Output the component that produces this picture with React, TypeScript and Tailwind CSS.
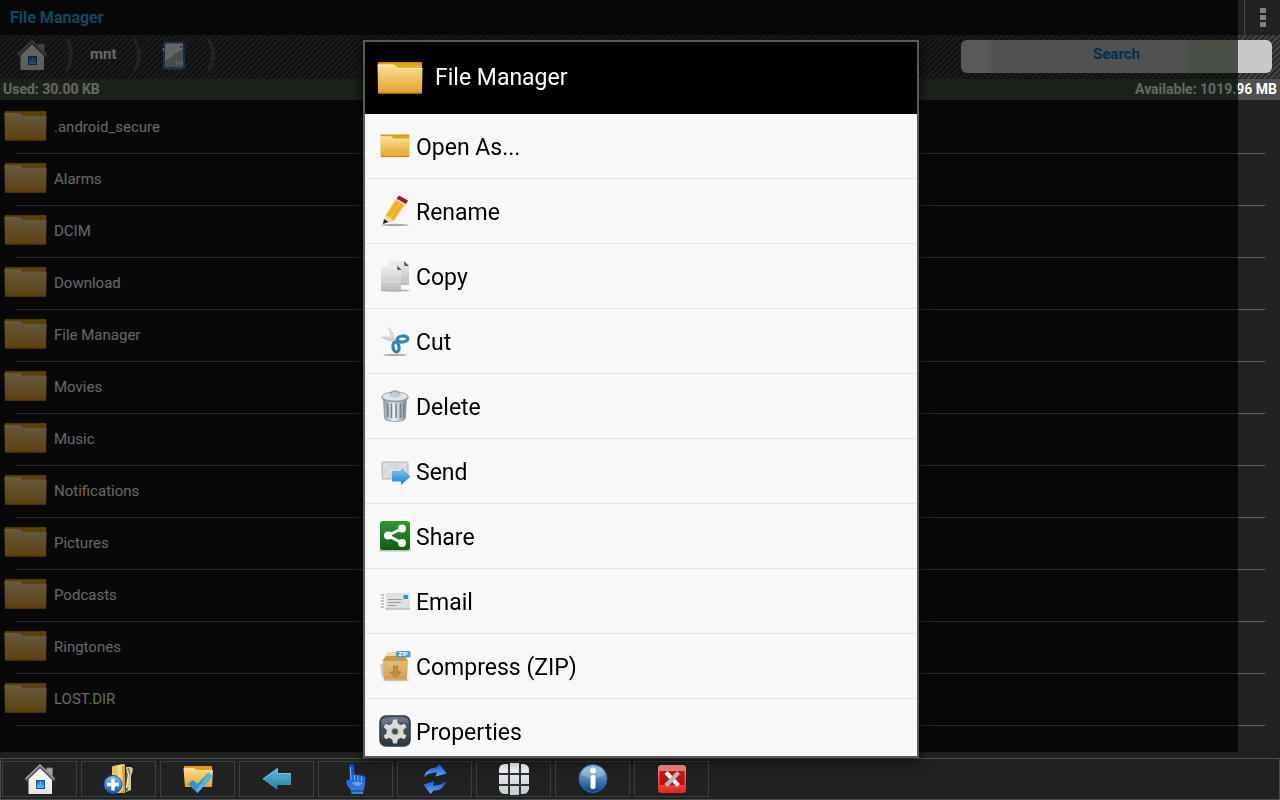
import type { ReactNode } from "react";

const folders = [
  ".android_secure",
  "Alarms",
  "DCIM",
  "Download",
  "File Manager",
  "Movies",
  "Music",
  "Notifications",
  "Pictures",
  "Podcasts",
  "Ringtones",
  "LOST.DIR",
];

// gradients shared by all icons
function IconDefs() {
  const gradients = [
    { id: "folderFront", from: "#fbe09a", to: "#e5a32a" },
    { id: "folderBack", from: "#dd9a12", to: "#f3c14b" },
    { id: "wall", from: "#ffffff", to: "#e4e4e4" },
    { id: "windowBlue", from: "#1b6fd0", to: "#5cc6fa" },
    { id: "paper", from: "#efefef", to: "#bdbdbd" },
    { id: "arrowBlue", from: "#5cb9e0", to: "#2f7f9f" },
    { id: "sendBlue", from: "#7fd0f5", to: "#1c7fc0" },
    { id: "royal", from: "#1f4fd8", to: "#5ab4ff" },
    { id: "hand", from: "#0b3fd0", to: "#3f86dd" },
    { id: "orb", from: "#9cc6e6", to: "#0e3f8f" },
    { id: "plusOrb", from: "#7fc0f5", to: "#1456b8" },
    { id: "green", from: "#2f9a35", to: "#0d5c14" },
    { id: "red", from: "#f0928c", to: "#e0251f" },
    { id: "slate", from: "#59647a", to: "#2c353d" },
    { id: "box", from: "#e3bd72", to: "#cfa04a" },
    { id: "sd", from: "#2f62b0", to: "#4d83c4" },
    { id: "tile", from: "#fafafa", to: "#c3cad0" },
  ];
  return (
    <svg className="absolute h-0 w-0" aria-hidden="true">
      <defs>
        {gradients.map((g) => (
          <linearGradient key={g.id} id={g.id} x1="0" y1="0" x2="0" y2="1">
            <stop offset="0" stopColor={g.from} />
            <stop offset="1" stopColor={g.to} />
          </linearGradient>
        ))}
        <linearGradient id="can" x1="0" y1="0" x2="1" y2="0">
          <stop offset="0" stopColor="#8a99a3" />
          <stop offset="0.45" stopColor="#f1f5f7" />
          <stop offset="1" stopColor="#7d8d98" />
        </linearGradient>
      </defs>
    </svg>
  );
}

function Icon({ children }: { children: ReactNode }) {
  return (
    <svg viewBox="0 0 32 32" className="h-8 w-8 shrink-0" aria-hidden="true">
      {children}
    </svg>
  );
}

function FolderIcon({ className }: { className: string }) {
  return (
    <svg viewBox="0 0 46 34" preserveAspectRatio="none" className={`shrink-0 ${className}`} aria-hidden="true">
      <path d="M1 2.500Q1 1 2.500 1H44Q45 1 45 2.500V12H1Z" fill="url(#folderBack)" />
      <path d="M1 1.500H45" stroke="#c08a16" />
      <path d="M.5 3.500H16.500Q18 3.500 19 5.500Q20 7 21.500 7H45.500L45 31.500Q45 32.500 44 32.500H2Q1 32.500 1 31.500Z" fill="url(#folderFront)" />
      <path d="M.5 4H16.500Q18 4 19 6Q20 7.500 21.500 7.500H45.500" fill="none" stroke="#fff0b8" strokeWidth=".8" />
      <path d="M1.500 32H44.500" stroke="#c47f10" strokeWidth="1.200" />
    </svg>
  );
}

function HomeIcon() {
  return (
    <Icon>
      <path d="M22.500 5H28.500V14L22.500 9Z" fill="#a9a9a9" stroke="#6d6d6d" />
      <path d="M4.500 15L16 4L28 15V31H4.500Z" fill="url(#wall)" />
      <path d="M1.500 17L16 3L30.500 17" fill="none" stroke="#5c5c5c" strokeWidth="3.400" />
      <path d="M2 15.500L16 2L30 15.500" fill="none" stroke="#a6a6a6" strokeWidth="1.200" />
      <rect x="12" y="17" width="9" height="9" fill="#1a4fa3" />
      <rect x="13" y="18" width="7" height="7" fill="url(#windowBlue)" />
      <path d="M16.500 18V22" stroke="#a8dcff" strokeWidth=".5" />
    </Icon>
  );
}

function SdCardIcon() {
  return (
    <Icon>
      <path d="M6 2H25L27 4V29Q27 30.500 25.500 30.500H6.500Q5 30.500 5 29V3Q5 2 6 2Z" fill="url(#sd)" />
      <path d="M7 6Q7 4.500 8.500 4.500H23.500Q25 4.500 25 6V28H7Z" fill="#d8d8d8" />
      <path d="M7 6Q7 4.500 8.500 4.500H23.500Q25 4.500 25 6V10L7 22Z" fill="#fafafa" />
      <path d="M25 10L7 22V28H25Z" fill="#b4bdc8" />
      <circle cx="23" cy="8" r="1" fill="#d0483c" />
      <path d="M17.500 22.500H19.500L18 25H20M21.500 22.500L21 25M23 22.500H24.500V25H22.500" fill="none" stroke="#fff" />
      <path d="M5.500 9V12" stroke="#fff" strokeWidth="1.500" />
    </Icon>
  );
}

function AddFolderIcon() {
  return (
    <Icon>
      <path d="M23 4L28 4Q30 5 30 7L28 13V27L23 29Z" fill="#d9c98c" />
      <path d="M23 7L26 5L27 10L24 22L25 27L22 29Z" fill="#595959" />
      <path d="M24.500 7L25.500 12L23.500 25" fill="none" stroke="#e9e9e9" strokeWidth="1.400" />
      <path d="M10 3L20 1Q22 1 22 3V30L11 30Q9 30 9 28V4Z" fill="#e6c55f" />
      <path d="M14 2.500L20 1.500Q22 1.500 22 3V30L16 30Z" fill="#f0d987" />
      <path d="M19 3L20 27L16 30H22V3Z" fill="#cf9e33" />
      <circle cx="10" cy="21.500" r="9" fill="url(#plusOrb)" stroke="#1b539d" />
      <path d="M10 15.500V27.500M4 21.500H16" stroke="#fff" strokeWidth="3.400" />
    </Icon>
  );
}

function SelectAllIcon() {
  return (
    <Icon>
      <path d="M2 3H30V20H3Z" fill="url(#folderBack)" />
      <path d="M1.500 5H12L15 7H31L30 24H3Z" fill="url(#folderFront)" />
      <path d="M6 21L11 17L15.500 21L26.500 9.500L30.500 13.500L15.500 30Z" fill="#2f92d1" />
      <path d="M26.500 9.500L30.500 13.500L15.500 30L14 28Z" fill="#55b5ea" />
    </Icon>
  );
}

function BackIcon() {
  return (
    <Icon>
      <path d="M1.500 16L16.500 5V10H30V22H16.500V27Z" fill="url(#arrowBlue)" />
      <path d="M2 16L16.500 5.500V10.500H29.500" fill="none" stroke="#83cdea" strokeWidth=".8" />
    </Icon>
  );
}

function HandIcon() {
  return (
    <Icon>
      <path d="M9 2.500Q9 1 11.500 1Q14 1 14 2.500L14.500 12Q17 10.500 18 12.500Q20.500 10.500 21.500 13Q24.500 11.500 25.500 14.500L25 22Q24 25 23.500 27L23 31H11.500L11 27Q7 23 6.500 19.500L6.500 16.500L10 17Z" fill="url(#hand)" />
      <path d="M10.500 4L11 17M14.500 12V17M18 12.500V17.500M21.500 13V18" stroke="#78b8ff" strokeWidth="1" />
      <path d="M12 20Q17 17 23 20L19 23Q14 23 12 20Z" fill="#7cb9ee" opacity=".7" />
      <path d="M12 28H23" stroke="#133088" />
    </Icon>
  );
}

function RefreshIcon() {
  return (
    <Icon>
      <path d="M5 14Q7 5 17 4.500L20.500 1L27.500 10.500L16.500 13.500L18 9.500Q10 9 5 14Z" fill="url(#royal)" />
      <path d="M27 18Q24 28 14.500 27.500L11.500 31L4.500 21.500L15.500 18L14 22.500Q21 23 27 18Z" fill="url(#royal)" />
    </Icon>
  );
}

function GridIcon() {
  return (
    <Icon>
      <rect x="1" y="1" width="30" height="30" rx="6" fill="#333" />
      <path d="M7 1H10V10H1V7Q1 1 7 1ZM12 0H21V10H12ZM23 1H26Q31 2 31 7V10H23ZM1 12H10V21H1ZM12 12H21V21H12ZM23 12H31V21H23ZM1 23H10V31H7Q2 31 1 26ZM12 23H21V32H12ZM23 23H31V26Q30 31 25 31H23Z" fill="url(#tile)" />
    </Icon>
  );
}

function InfoIcon() {
  return (
    <Icon>
      <circle cx="16" cy="15.500" r="14" fill="url(#orb)" stroke="#2b6bab" />
      <path d="M4 12Q6 3 16 3Q26 3 28 12Q16 18 4 12Z" fill="#fff" opacity=".22" />
      <circle cx="16" cy="7.500" r="3" fill="#fff" />
      <rect x="13.500" y="12" width="5" height="14" rx="2" fill="#fff" />
    </Icon>
  );
}

function CloseIcon() {
  return (
    <Icon>
      <rect x="2" y="2" width="28" height="28" rx="3" fill="url(#red)" />
      <rect x="3.500" y="8" width="25" height="14" fill="#b90808" opacity=".85" />
      <path d="M10 9.500L22.500 22.500" stroke="#fff" strokeWidth="4" />
      <path d="M22.500 9.500L10 22.500" stroke="#b8b8b8" strokeWidth="4" />
    </Icon>
  );
}

function RenameIcon() {
  return (
    <Icon>
      <ellipse cx="16" cy="30" rx="14" ry="1.200" fill="#a9a9a9" />
      <path d="M5 28L6.500 20L17 4L26 9.500L15 26Z" fill="#f1bd38" />
      <path d="M9.500 21.500L20 5.500M13 23.500L23.500 8" stroke="#d89a1c" strokeWidth="1" />
      <path d="M5 28L6.500 20L15 26Z" fill="#f0dcb4" />
      <path d="M4 29L5 24L9.500 27Z" fill="#222" />
      <path d="M16.500 5L25.500 10.500L27.500 8L18.500 2.500Z" fill="#d5d5d5" />
      <path d="M17.500 3.500L20 .5L29 5.500L27 9Z" fill="#b3141f" />
    </Icon>
  );
}

function CopyIcon() {
  return (
    <Icon>
      <ellipse cx="16" cy="30.500" rx="15" ry="1.200" fill="#b0b0b0" />
      <path d="M10 1H25L30 6V25H10Z" fill="url(#paper)" />
      <path d="M25 1L30 6H25.500Z" fill="#555" />
      <path d="M2 6H18L22 10V30H2Z" fill="url(#paper)" />
      <path d="M18 5.500L22.500 10H18.500Z" fill="#555" />
      <path d="M2 14H22M2 22H22" stroke="#fff" opacity=".3" />
    </Icon>
  );
}

function CutIcon() {
  return (
    <Icon>
      <ellipse cx="16" cy="30" rx="12" ry="1" fill="#aaa" />
      <path d="M9 1Q14 5 17 17L14 18Q10 9 9 1Z" fill="#dadada" />
      <path d="M1 12Q9 10 20 15L18 18Q8 16 1 12Z" fill="#d0d0d0" />
      <ellipse cx="23.500" cy="14" rx="5.300" ry="3" transform="rotate(-5 23.500 14)" fill="none" stroke="#2e86b4" strokeWidth="3.200" />
      <ellipse cx="17" cy="22" rx="3" ry="5" transform="rotate(-8 17 22)" fill="none" stroke="#2e86b4" strokeWidth="3.200" />
    </Icon>
  );
}

function DeleteIcon() {
  return (
    <Icon>
      <path d="M4.500 8L5.500 28Q6 31.500 16 31.500Q26 31.500 26.500 28L27.500 8Z" fill="url(#can)" stroke="#8f9ea8" strokeWidth=".8" />
      <path d="M8.500 13L9 27M12.500 13.500V28M17 13.500V28M21.500 13.500V28M25 13L24.500 27" stroke="#71808b" strokeWidth="1.500" />
      <ellipse cx="16" cy="7.500" rx="13.500" ry="5" fill="#8c9ba5" />
      <ellipse cx="16" cy="6.500" rx="13" ry="4.600" fill="#dfe5e8" stroke="#8d9aa3" strokeWidth=".8" />
      <ellipse cx="16" cy="5" rx="6.500" ry="2.500" fill="#c5ced4" />
      <path d="M12.500 4Q12 .8 16 .8Q20 .8 19.500 4" fill="none" stroke="#909da5" strokeWidth="1.200" />
    </Icon>
  );
}

function SendIcon() {
  return (
    <Icon>
      <rect x="3" y="7" width="26" height="17" rx="1" fill="#d9d9d9" stroke="#b5b5b5" />
      <path d="M5 9L16 18L27 9M5 22L12 15M27 22L20 15" fill="none" stroke="#e6e6e6" strokeWidth="1.300" />
      <path d="M13 16H22V12.500L31.500 21.500L22 30V26.500H13Z" fill="url(#sendBlue)" />
    </Icon>
  );
}

function ShareIcon() {
  return (
    <Icon>
      <rect x="0" y="28" width="32" height="3.500" rx="1.700" fill="#bfbfbf" />
      <rect x="1" y="1" width="30" height="29" rx="3" fill="url(#green)" />
      <path d="M23 8.500L9 15.500L23 23" fill="none" stroke="#fff" strokeWidth="3" />
      <circle cx="23" cy="8.500" r="4" fill="#fff" />
      <circle cx="9" cy="15.500" r="4" fill="#fff" />
      <circle cx="23" cy="23" r="4" fill="#fff" />
    </Icon>
  );
}

function EmailIcon() {
  return (
    <Icon>
      <path d="M1.500 10H5M2.500 13H5M1.500 16H5M2.500 19H5M1.500 22H5" stroke="#8f8f8f" strokeWidth="1.200" />
      <rect x="6.500" y="8" width="24.500" height="16" fill="#dfe0e2" />
      <path d="M6.500 24H31" stroke="#a9adb2" strokeWidth="1.200" />
      <rect x="24.500" y="10" width="4.500" height="4" fill="#2a8fd0" />
      <path d="M9 14.500H23M9 17.500H22M9 20.500H17" stroke="#9a9a9a" strokeWidth="1.200" />
    </Icon>
  );
}

function ZipIcon() {
  return (
    <Icon>
      <path d="M1 15L5 13L6 29L3 27Z" fill="#c9c9c9" />
      <ellipse cx="17" cy="30" rx="14" ry="1.300" fill="#c4c4c4" />
      <path d="M7 4L9 2H20L27 6V10H5Z" fill="#ead8ab" />
      <path d="M3 11L7 6H26L29 11Z" fill="#c99a47" />
      <path d="M4 11H29L28 29.500H5Z" fill="url(#box)" />
      <path d="M14.500 16H18.500V22H22L16.500 27.500L11 22H14.500Z" fill="#c09045" stroke="#a57c38" strokeWidth=".9" />
      <rect x="17" y="1" width="14.500" height="6.500" rx="1.500" fill="#5599cf" />
      <text x="24.200" y="6.300" textAnchor="middle" fontSize="6" fontWeight="700" fontFamily="Roboto, sans-serif" fill="#fff">
        ZIP
      </text>
    </Icon>
  );
}

function PropertiesIcon() {
  const teeth = [0, 60, 120, 180, 240, 300];
  return (
    <Icon>
      <rect x="1" y="1" width="30" height="30" rx="6" fill="url(#slate)" stroke="#30383f" strokeWidth="1.500" />
      <path d="M3 4Q16 0 29 4V8Q16 4 3 10Z" fill="#8793a0" opacity=".4" />
      {teeth.map((deg) => (
        <path key={deg} d="M13 10L14 4.500H18L19 10Z" fill="#dcdbd5" transform={`rotate(${deg} 16 16.500)`} />
      ))}
      <circle cx="16" cy="16.500" r="8.500" fill="#dcdbd5" />
      <circle cx="16" cy="16.500" r="3.300" fill="#434d57" stroke="#a5a6a2" />
    </Icon>
  );
}

function Chevron() {
  return (
    <svg viewBox="0 0 10 34" className="h-[34px] w-2.5 shrink-0" aria-hidden="true">
      <path d="M1 1H4Q9 9 9 17Q9 25 4 33H1Q5 25 5 17Q5 9 1 1Z" fill="#555" />
    </svg>
  );
}

const actions = [
  { label: "Open As...", icon: <FolderIcon className="h-6 w-[30px]" /> },
  { label: "Rename", icon: <RenameIcon /> },
  { label: "Copy", icon: <CopyIcon /> },
  { label: "Cut", icon: <CutIcon /> },
  { label: "Delete", icon: <DeleteIcon /> },
  { label: "Send", icon: <SendIcon /> },
  { label: "Share", icon: <ShareIcon /> },
  { label: "Email", icon: <EmailIcon /> },
  { label: "Compress (ZIP)", icon: <ZipIcon /> },
  { label: "Properties", icon: <PropertiesIcon /> },
];

const tools = [
  { label: "Home", icon: <HomeIcon /> },
  { label: "New folder", icon: <AddFolderIcon /> },
  { label: "Select all", icon: <SelectAllIcon /> },
  { label: "Back", icon: <BackIcon /> },
  { label: "Touch", icon: <HandIcon /> },
  { label: "Refresh", icon: <RefreshIcon /> },
  { label: "Grid view", icon: <GridIcon /> },
  { label: "Info", icon: <InfoIcon /> },
  { label: "Exit", icon: <CloseIcon /> },
];

function ActionDialog() {
  return (
    <div className="fixed inset-0 flex justify-center pt-10 pb-[42px] pl-0.5">
      <div
        role="dialog"
        aria-labelledby="dialog-title"
        className="w-[556px] overflow-hidden border-2 border-[#5a5a5a] bg-[#f8f8f8] shadow-[0_2px_10px_2px_rgba(0,0,0,0.5)]"
      >
        <div className="flex h-[72px] items-center gap-3 bg-black pl-3">
          <FolderIcon className="h-[34px] w-[46px]" />
          <h2 id="dialog-title" className="text-[23px] text-white">
            File Manager
          </h2>
        </div>
        <ul>
          {actions.map((action) => (
            <li key={action.label} className="border-b border-[#e4e4e4]">
              <button type="button" className="flex h-16 w-full items-center gap-1.5 pl-[15px] text-left text-[23px] text-black">
                <span className="flex w-[30px] shrink-0 justify-center">{action.icon}</span>
                <span className="pt-1">{action.label}</span>
              </button>
            </li>
          ))}
        </ul>
      </div>
    </div>
  );
}

export default function App() {
  return (
    <div className="flex h-screen min-h-[600px] flex-col overflow-hidden bg-[#212121] font-['Roboto',sans-serif] text-white">
      <IconDefs />
      <div className="flex min-h-0 flex-1 flex-col bg-[linear-gradient(to_right,#141414_calc(100%-42px),#212121_0)]">
        <header className="flex h-[35px] shrink-0 items-center justify-between pl-2.5">
          <h1 className="text-base font-bold text-[#2cb0e8]">File Manager</h1>
          <button
            type="button"
            aria-label="More options"
            className="flex h-full w-9 flex-col items-center justify-center gap-0.5 border-l border-[#3c4a4a]"
          >
            <span className="h-[5px] w-1.5 bg-[#808080]" />
            <span className="h-[5px] w-1.5 bg-[#808080]" />
            <span className="h-[5px] w-1.5 bg-[#808080]" />
          </button>
        </header>

        <div className="flex h-11 shrink-0 items-center justify-between bg-[repeating-linear-gradient(135deg,#444_0px,#444_2px,#2a2a2a_2px,#2a2a2a_4px)] pr-2 pb-1 pl-4">
          <nav className="flex items-center">
            <a href="#home" aria-label="Home">
              <HomeIcon />
            </a>
            <span className="ml-4">
              <Chevron />
            </span>
            <a href="#mnt" className="mx-4 pb-0.5 text-[15px] font-bold">
              mnt
            </a>
            <Chevron />
            <a href="#sdcard" aria-label="SD card" className="mx-4">
              <SdCardIcon />
            </a>
            <Chevron />
          </nav>
          <input
            type="text"
            aria-label="Search"
            placeholder="Search"
            className="mt-0.5 h-[33px] w-[311px] rounded-md bg-[linear-gradient(to_right,#dedede_26px,#cacaca_32px,#cacaca_225px,#b8c6b4_231px,#b8c6b4_277px,#c8c8c8_277px)] pb-1 text-center text-[15px] font-bold outline-none placeholder:text-[#0b75c0]"
          />
        </div>

        <div className="flex h-[21px] shrink-0 items-center justify-between bg-[linear-gradient(to_right,#42543f_calc(100%-42px),#505050_0)] px-[3px] pb-0.5 text-sm font-bold">
          <span>Used: 30.00 KB</span>
          <span>Available: 1019.96 MB</span>
        </div>

        <ul className="min-h-0 flex-1 overflow-hidden pt-0.5">
          {folders.map((name) => (
            <li key={name}>
              <button type="button" className="flex h-[51px] w-full items-center gap-[7px] pb-1 pl-1 text-left text-[15px]">
                <FolderIcon className="h-8 w-[43px]" />
                <span className="pt-1">{name}</span>
              </button>
              <div className="mx-[15px] h-px bg-[#606060]" />
            </li>
          ))}
        </ul>
      </div>

      <div className="h-1.5 shrink-0" />
      <footer className="flex h-[42px] shrink-0 gap-1 border border-[#4a4a4a] px-px pt-0.5">
        {tools.map((tool) => (
          <button
            key={tool.label}
            type="button"
            aria-label={tool.label}
            className="flex h-9 w-[75px] items-center justify-center border border-[#364240]"
          >
            {tool.icon}
          </button>
        ))}
      </footer>

      <div className="fixed top-0 right-[42px] bottom-12 left-0 bg-black/60" />
      <ActionDialog />
    </div>
  );
}
